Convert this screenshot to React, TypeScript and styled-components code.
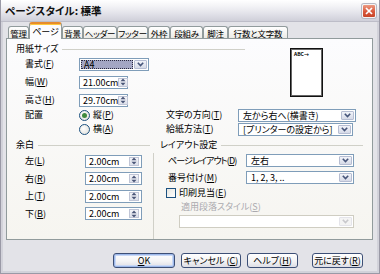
import React from "react";
import styled, { createGlobalStyle, css } from "styled-components";

const Global = createGlobalStyle`
  html, body { margin: 0; padding: 0; background: #ffffff; }
  body {
    font-family: "Noto Sans CJK JP", "Noto Sans", sans-serif;
    font-size: 9px;
    color: #000;
    font-feature-settings: "palt";
  }
  * { box-sizing: border-box; }
`;

const Window = styled.div`
  width: 380px;
  height: 274px;
  display: flex;
  flex-direction: column;
  border: 1px solid #9a99a6;
  border-top: none;
  background: #e3e3e8;
  overflow: hidden;
`;

const TitleBar = styled.div`
  height: 22px;
  flex: none;
  display: flex;
  align-items: center;
  justify-content: space-between;
  padding: 0 3px 0 4px;
  background: linear-gradient(#ffffff 0%, #f3f3f6 30%, #e2e2e9 65%, #cfcfd9 100%);
  border-bottom: 1px solid #bdbdc8;
`;

const Title = styled.span`
  font-size: 10.5px;
  font-weight: 700;
  color: #111;
  white-space: nowrap;
`;

const CloseBtn = styled.div`
  width: 14px;
  height: 14px;
  border-radius: 2px;
  border: 1px solid #f4f4f4;
  background: linear-gradient(#ec9a82, #d9583c 55%, #c84428);
  display: flex;
  align-items: center;
  justify-content: center;
  box-shadow: 0 0 0 1px #b7b7c2;
`;

const Body = styled.div`
  flex: 1;
  display: flex;
  flex-direction: column;
  border-style: solid;
  border-color: #d2d2da;
  border-width: 0 2px 2px 2px;
  padding: 0 4px 0 3px;
`;

const TabRow = styled.div`
  height: 16px;
  flex: none;
  display: flex;
  align-items: flex-end;
  padding-left: 2px;
`;

const Tab = styled.div<{ $w: number; $active?: boolean }>`
  width: ${(p) => p.$w}px;
  height: ${(p) => (p.$active ? 17 : 12)}px;
  margin-bottom: ${(p) => (p.$active ? -1 : 0)}px;
  display: flex;
  align-items: center;
  justify-content: center;
  font-size: 8.5px;
  line-height: 10px;
  letter-spacing: -0.2px;
  white-space: nowrap;
  border: 1px solid #919b9c;
  border-bottom: none;
  border-radius: 3px 3px 0 0;
  position: relative;
  z-index: ${(p) => (p.$active ? 2 : 1)};
  background: linear-gradient(#ffffff, #ecebe6);
  ${(p) =>
    p.$active &&
    css`
      background: #fcfcfe;
      border-top: 2px solid #e68b2c;
      box-shadow: inset 0 1px 0 #ffc83c;
      padding-top: 1px;
      font-size: 9px;
    `}
`;

const Panel = styled.div`
  height: 202px;
  flex: none;
  display: flex;
  flex-direction: column;
  border: 1px solid #919b9c;
  background: linear-gradient(#fcfcfe, #f6f5f0);
  padding: 4px 9px 0 9px;
`;

const TopGrid = styled.div`
  display: grid;
  grid-template-columns: 63px 69px 18px 72px 1fr;
  grid-template-rows: 12px 18px 18px 18px 12px 16px;
`;

const GroupHeader = styled.div<{ $w?: number; $col?: string; $row?: string }>`
  ${(p) => (p.$w ? `width: ${p.$w}px;` : "")}
  ${(p) => (p.$col ? `grid-column: ${p.$col};` : "")}
  ${(p) => (p.$row ? `grid-row: ${p.$row};` : "")}
  height: 12px;
  display: flex;
  align-items: center;
  gap: 4px;
  font-size: 9px;
  line-height: 12px;
  white-space: nowrap;
  &::after {
    content: "";
    flex: 1;
    height: 0;
    border-top: 1px solid #d0d0c8;
  }
`;

const Cell = styled.div<{ $col: string; $row: string; $pad?: number }>`
  grid-column: ${(p) => p.$col};
  grid-row: ${(p) => p.$row};
  padding-left: ${(p) => p.$pad ?? 0}px;
  display: flex;
  align-items: center;
  min-width: 0;
`;

const Label = styled.span<{ $disabled?: boolean; $tight?: boolean }>`
  font-size: 9px;
  line-height: 12px;
  white-space: nowrap;
  letter-spacing: ${(p) => (p.$tight ? "-0.9px" : "0")};
  color: ${(p) => (p.$disabled ? "#aaa9ae" : "#000")};
`;

const Key = styled.span`
  text-decoration: underline;
  text-underline-offset: 1px;
`;

const Combo = styled.div<{ $w: number; $disabled?: boolean }>`
  width: ${(p) => p.$w}px;
  height: 13px;
  flex: none;
  display: flex;
  align-items: stretch;
  border: 1px solid ${(p) => (p.$disabled ? "#cfcdc2" : "#7f9db9")};
  background: #ffffff;
  padding: 1px;
  gap: 1px;
`;

const ComboText = styled.span<{ $sel?: boolean }>`
  flex: 1;
  display: flex;
  align-items: center;
  padding-left: 3px;
  font-size: 9px;
  line-height: 9px;
  white-space: nowrap;
  ${(p) =>
    p.$sel &&
    css`
      background: #a3a6c4;
      outline: 1px dotted #2a2a40;
      outline-offset: -1px;
    `}
`;

const ArrowBtn = styled.span<{ $disabled?: boolean }>`
  width: 13px;
  flex: none;
  display: flex;
  align-items: center;
  justify-content: center;
  border: 1px solid ${(p) => (p.$disabled ? "#e4e4ea" : "#b6bdd2")};
  border-radius: 1px;
  background: ${(p) => (p.$disabled ? "#f4f4f4" : "linear-gradient(#f1f3f9, #d6dae7)")};
`;

const SpinBox = styled.div<{ $w: number }>`
  width: ${(p) => p.$w}px;
  height: 13px;
  flex: none;
  display: flex;
  align-items: stretch;
  border: 1px solid #7f9db9;
  background: #ffffff;
  padding: 1px 2px 1px 1px;
`;

const SpinText = styled.span`
  flex: 1;
  display: flex;
  align-items: center;
  padding-left: 2px;
  font-size: 9px;
  line-height: 9px;
  white-space: nowrap;
`;

const SpinBtn = styled.span`
  width: 10px;
  flex: none;
  display: flex;
  align-items: center;
  justify-content: center;
  border: 1px solid #c0c5d6;
  background: linear-gradient(#f4f5f9, #dde0ea);
`;

const Radio = styled.span<{ $on?: boolean }>`
  width: 11px;
  height: 11px;
  flex: none;
  border-radius: 50%;
  border: 1px solid #1c5180;
  background: radial-gradient(circle at 40% 40%, #ffffff, #dcdcd6);
  display: flex;
  align-items: center;
  justify-content: center;
  margin-right: 3px;
  &::after {
    content: "";
    width: 5px;
    height: 5px;
    border-radius: 50%;
    background: ${(p) => (p.$on ? "#3f8a3f" : "transparent")};
  }
`;

const Check = styled.span`
  width: 10px;
  height: 10px;
  flex: none;
  border: 1px solid #1c5180;
  background: linear-gradient(135deg, #e6e6e0, #ffffff);
  margin-right: 3px;
`;

const Preview = styled.div`
  width: 33px;
  height: 49px;
  align-self: flex-start;
  margin: 5px 0 0 52px;
  border: 1px solid #111;
  box-shadow: inset 0 0 0 1px #666;
  background: #ffffff;
  padding: 2px 3px;
  font-size: 5px;
  line-height: 6px;
  font-weight: 700;
  white-space: nowrap;
`;

const Bottom = styled.div`
  flex: 1;
  display: grid;
  grid-template-columns: 137px 1px 1fr;
  margin-top: 2px;
`;

const Column = styled.div<{ $pad?: number; $mr?: number }>`
  display: flex;
  flex-direction: column;
  padding-left: ${(p) => p.$pad ?? 0}px;
  padding-right: ${(p) => p.$mr ?? 0}px;
`;

const Separator = styled.div`
  margin-top: 14px;
  background: #d0d0c8;
  width: 1px;
`;

const MarginRows = styled.div`
  display: grid;
  grid-template-columns: 69px 57px;
  grid-auto-rows: 17.5px;
  margin-top: 1.5px;
`;

const LayoutRows = styled.div`
  display: grid;
  grid-template-columns: 86px 108px;
  grid-template-rows: 17px 17px 14px;
  margin-top: 1px;
`;

const RowCell = styled.div<{ $pad?: number; $span?: boolean }>`
  display: flex;
  align-items: center;
  padding-left: ${(p) => p.$pad ?? 0}px;
  ${(p) => (p.$span ? "grid-column: 1 / -1;" : "")}
`;

const SubBlock = styled.div<{ $pad: number; $mt: number }>`
  padding-left: ${(p) => p.$pad}px;
  margin-top: ${(p) => p.$mt}px;
  display: flex;
`;

const ButtonRow = styled.div`
  flex: 1;
  display: flex;
  justify-content: flex-end;
  align-items: flex-start;
  padding: 13px 10px 0 0;
  gap: 6px;
`;

const Btn = styled.div<{ $w: number; $def?: boolean; $ml?: number }>`
  width: ${(p) => p.$w}px;
  height: 15px;
  margin-left: ${(p) => p.$ml ?? 0}px;
  display: flex;
  align-items: center;
  justify-content: center;
  border: 1px solid #3d4f76;
  border-radius: 3px;
  background: linear-gradient(#ffffff, #f3f3f5 55%, #dedee5);
  font-size: 9px;
  line-height: 12px;
  white-space: nowrap;
  ${(p) =>
    p.$def &&
    css`
      box-shadow: inset 0 0 0 1px #9db8ea, inset 0 0 0 2px #c9d8f5;
    `}
`;

const Chevron = ({ c = "#46557a" }: { c?: string }) => (
  <svg width="7" height="5" viewBox="0 0 7 5">
    <path d="M0.8 0.8 L3.5 3.6 L6.2 0.8" fill="none" stroke={c} strokeWidth="1.6" />
  </svg>
);

const SpinArrows = () => (
  <svg width="6" height="8" viewBox="0 0 6 8">
    <path d="M3 0.5 L5.5 3.2 H0.5 Z" fill="#4a5678" />
    <path d="M3 7.5 L5.5 4.8 H0.5 Z" fill="#4a5678" />
  </svg>
);

const Acc = ({ t, k, sp }: { t: string; k: string; sp?: boolean }) => (
  <>
    {t}
    {sp ? " " : ""}(<Key>{k}</Key>)
  </>
);

const Select = ({
  w,
  text,
  sel,
  disabled,
}: {
  w: number;
  text: string;
  sel?: boolean;
  disabled?: boolean;
}) => (
  <Combo $w={w} $disabled={disabled}>
    <ComboText $sel={sel}>{text}</ComboText>
    <ArrowBtn $disabled={disabled}>
      <Chevron c={disabled ? "#c8c8cc" : "#46557a"} />
    </ArrowBtn>
  </Combo>
);

const Spin = ({ w, text }: { w: number; text: string }) => (
  <SpinBox $w={w}>
    <SpinText>{text}</SpinText>
    <SpinBtn>
      <SpinArrows />
    </SpinBtn>
  </SpinBox>
);

const tabs: { t: string; w: number; active?: boolean }[] = [
  { t: "管理", w: 21 },
  { t: "ページ", w: 33, active: true },
  { t: "背景", w: 21 },
  { t: "ヘッダー", w: 34 },
  { t: "フッター", w: 31 },
  { t: "外枠", w: 22 },
  { t: "段組み", w: 33 },
  { t: "脚注", w: 25 },
  { t: "行数と文字数", w: 60 },
];

const margins = [
  { t: "左", k: "L" },
  { t: "右", k: "R" },
  { t: "上", k: "T" },
  { t: "下", k: "B" },
];

export default function App() {
  return (
    <>
      <Global />
      <Window>
        <TitleBar>
          <Title>ページスタイル: 標準</Title>
          <CloseBtn>
            <svg width="8" height="8" viewBox="0 0 8 8">
              <path d="M1 1 L7 7 M7 1 L1 7" stroke="#ffffff" strokeWidth="1.7" />
            </svg>
          </CloseBtn>
        </TitleBar>
        <Body>
          <TabRow>
            {tabs.map((tb) => (
              <Tab key={tb.t} $w={tb.w} $active={tb.active}>
                {tb.t}
              </Tab>
            ))}
          </TabRow>
          <Panel>
            <TopGrid>
              <GroupHeader $w={229} $col="1 / -1" $row="1">
                用紙サイズ
              </GroupHeader>
              <Cell $col="5" $row="1 / 5">
                <Preview>ABC→</Preview>
              </Cell>

              <Cell $col="1" $row="2" $pad={9}>
                <Label>
                  <Acc t="書式" k="F" />
                </Label>
              </Cell>
              <Cell $col="2 / 4" $row="2">
                <Select w={70} text="A4" sel />
              </Cell>

              <Cell $col="1" $row="3" $pad={9}>
                <Label>
                  <Acc t="幅" k="W" />
                </Label>
              </Cell>
              <Cell $col="2 / 4" $row="3">
                <Spin w={49} text="21.00cm" />
              </Cell>

              <Cell $col="1" $row="4" $pad={9}>
                <Label>
                  <Acc t="高さ" k="H" />
                </Label>
              </Cell>
              <Cell $col="2 / 4" $row="4">
                <Spin w={49} text="29.70cm" />
              </Cell>

              <Cell $col="1" $row="5" $pad={9}>
                <Label>配置</Label>
              </Cell>
              <Cell $col="2" $row="5">
                <Radio $on />
                <Label>
                  <Acc t="縦" k="P" />
                </Label>
              </Cell>
              <Cell $col="2" $row="6">
                <Radio />
                <Label>
                  <Acc t="横" k="A" />
                </Label>
              </Cell>

              <Cell $col="4" $row="5">
                <Label>
                  <Acc t="文字の方向" k="T" />
                </Label>
              </Cell>
              <Cell $col="5" $row="5">
                <Select w={118} text="左から右へ(横書き)" />
              </Cell>
              <Cell $col="4" $row="6">
                <Label>
                  <Acc t="給紙方法" k="T" />
                </Label>
              </Cell>
              <Cell $col="5" $row="6">
                <Select w={115} text="[プリンターの設定から]" />
              </Cell>
            </TopGrid>

            <Bottom>
              <Column $mr={3}>
                <GroupHeader>余白</GroupHeader>
                <MarginRows>
                  {margins.map((m) => (
                    <React.Fragment key={m.k}>
                      <RowCell $pad={9}>
                        <Label>
                          <Acc t={m.t} k={m.k} />
                        </Label>
                      </RowCell>
                      <RowCell>
                        <Spin w={57} text="2.00cm" />
                      </RowCell>
                    </React.Fragment>
                  ))}
                </MarginRows>
              </Column>
              <Separator />
              <Column $pad={6}>
                <GroupHeader>レイアウト設定</GroupHeader>
                <LayoutRows>
                  <RowCell $pad={8}>
                    <Label $tight>
                      <Acc t="ページレイアウト" k="D" />
                    </Label>
                  </RowCell>
                  <RowCell>
                    <Select w={108} text="左右" />
                  </RowCell>
                  <RowCell $pad={8}>
                    <Label>
                      <Acc t="番号付け" k="M" />
                    </Label>
                  </RowCell>
                  <RowCell>
                    <Select w={108} text="1, 2, 3, .." />
                  </RowCell>
                  <RowCell $pad={6} $span>
                    <Check />
                    <Label>
                      <Acc t="印刷見当" k="E" />
                    </Label>
                  </RowCell>
                </LayoutRows>
                <SubBlock $pad={21} $mt={1}>
                  <Label $disabled>
                    <Acc t="適用段落スタイル" k="S" />
                  </Label>
                </SubBlock>
                <SubBlock $pad={19} $mt={2}>
                  <Select w={175} text="" disabled />
                </SubBlock>
              </Column>
            </Bottom>
          </Panel>
          <ButtonRow>
            <Btn $w={62} $def>
              <Key>O</Key>K
            </Btn>
            <Btn $w={60}>
              <Acc t="キャンセル" k="C" sp />
            </Btn>
            <Btn $w={51}>
              <Acc t="ヘルプ" k="H" />
            </Btn>
            <Btn $w={51} $ml={8}>
              <Acc t="元に戻す" k="R" />
            </Btn>
          </ButtonRow>
        </Body>
      </Window>
    </>
  );
}
